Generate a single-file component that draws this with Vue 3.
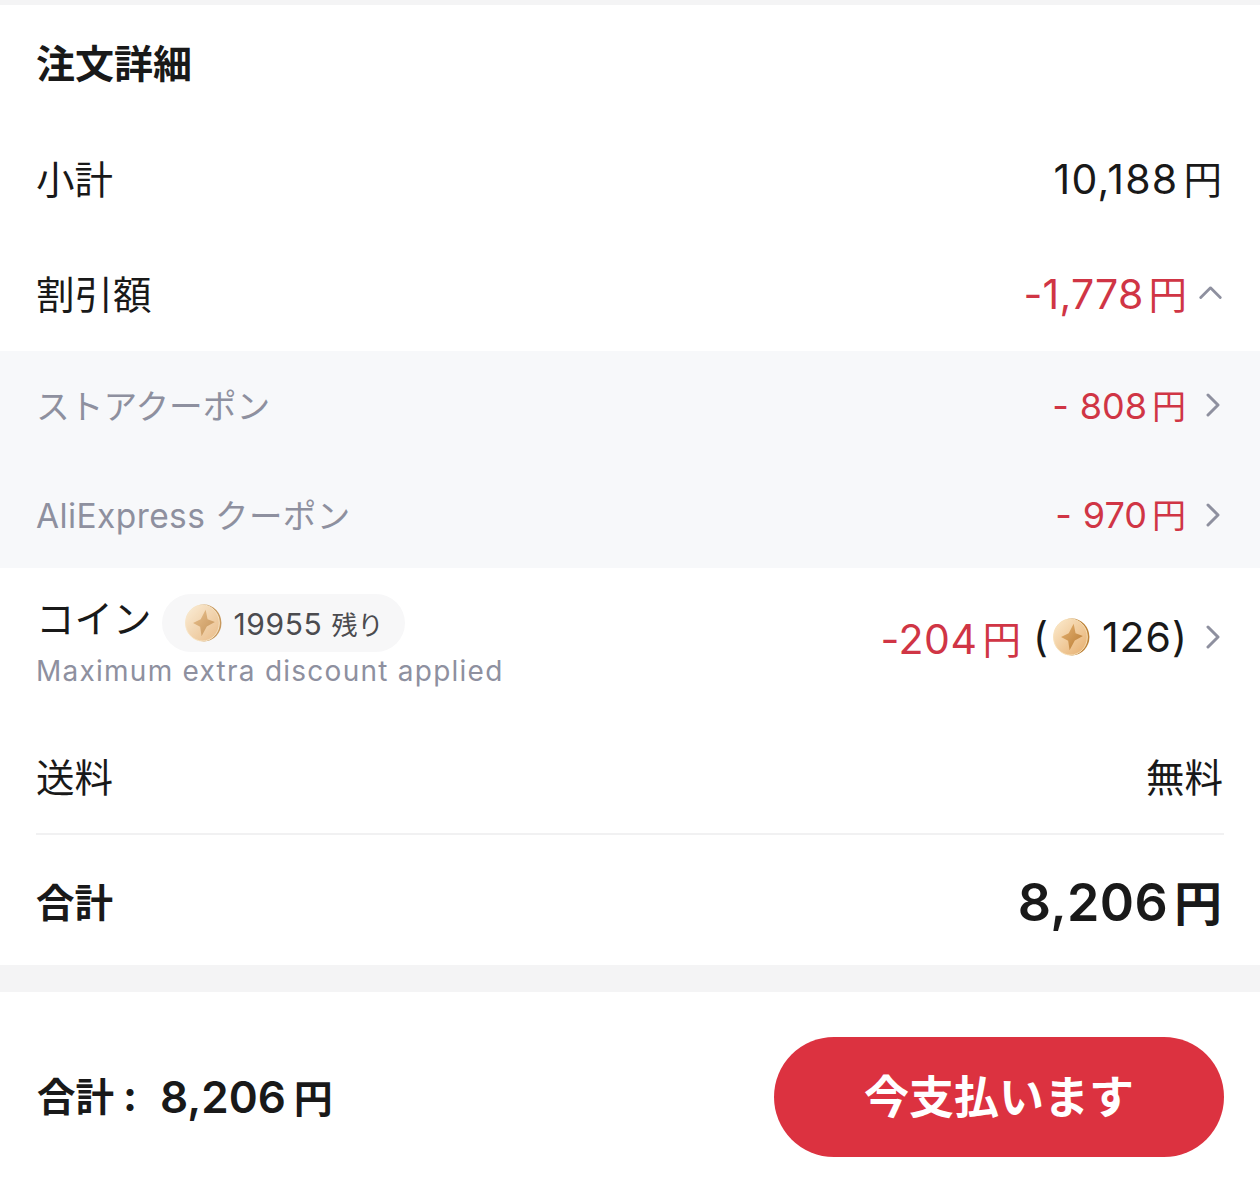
<template>
  <div class="page">
    <div class="strip top"></div>
    <section class="details">
      <h2 class="title">注文詳細</h2>
      <div class="row sub">
        <span>小計</span>
        <span class="num">10,188<i class="yen">円</i></span>
      </div>
      <div class="row disc">
        <span>割引額</span>
        <span class="val">
          <span class="num red">-1,778<i class="yen">円</i></span>
          <svg class="chev up" viewBox="0 0 24 14"><path d="M1.5 12.5 12 2l10.5 10.5" /></svg>
        </span>
      </div>
      <div class="band">
        <div v-for="c in coupons" :key="c.name" class="row coupon" :class="c.cls">
          <span class="cname">{{ c.name }}</span>
          <span class="val">
            <span class="num red"><span class="dash">-</span>{{ c.amount }}<i class="yen">円</i></span>
            <svg class="chev" viewBox="0 0 14 24"><path d="M2 2l10 10L2 22" /></svg>
          </span>
        </div>
      </div>
      <div class="row coin">
        <div class="coinleft">
          <div class="coinhead">
            <span class="coinlabel">コイン</span>
            <span class="pill">
              <svg class="coinicon pale" viewBox="0 0 40 40"><use href="#coin" /></svg>
              <span class="pilltext">19955<i class="left">残り</i></span>
            </span>
          </div>
          <div class="hint">Maximum extra discount applied</div>
        </div>
        <span class="val">
          <span class="num red">-204<i class="yen">円</i></span>
          <span class="num paren">(</span>
          <svg class="coinicon rich" viewBox="0 0 40 40">
            <defs>
              <linearGradient id="face" x1="0" y1="0" x2="1" y2="1">
                <stop offset="0" stop-color="#fcecd0" />
                <stop offset="1" stop-color="#e6ad6c" />
              </linearGradient>
              <linearGradient id="star" x1="0" y1="0" x2="1" y2="1">
                <stop offset="0" stop-color="#e6b474" />
                <stop offset="1" stop-color="#b87a32" />
              </linearGradient>
              <g id="coin">
                <ellipse cx="21" cy="20" rx="18.4" ry="19.4" fill="#bd8238" />
                <ellipse cx="19.4" cy="20" rx="17.8" ry="19" fill="url(#face)" stroke="#f8e2bc" stroke-width="1" />
                <path d="M22.8 6 24.8 16 32.5 19 24 23.6 18.5 34 17 24 9.5 20 17.6 16Z" fill="url(#star)" />
              </g>
            </defs>
            <use href="#coin" />
          </svg>
          <span class="num">126)</span>
          <svg class="chev" viewBox="0 0 14 24"><path d="M2 2l10 10L2 22" /></svg>
        </span>
      </div>
      <div class="row ship">
        <span>送料</span>
        <span class="free">無料</span>
      </div>
      <div class="row total">
        <span>合計</span>
        <span class="num big">8,206<i class="yen">円</i></span>
      </div>
    </section>
    <div class="strip mid"></div>
    <footer class="bar">
      <span class="sum"><span class="sumlabel">合計<span class="colon">:</span></span><span class="num">8,206<i class="yen">円</i></span></span>
      <button class="pay">今支払います</button>
    </footer>
  </div>
</template>

<script setup>
const coupons = [
  { name: 'ストアクーポン', amount: '808', cls: 'first' },
  { name: 'AliExpress クーポン', amount: '970', cls: 'second' }
]
</script>

<style>
html, body { background: #fff; }
</style>

<style scoped>
.page {
  width: 1260px;
  height: 1193px;
  background: #fff;
  color: #191919;
  font-family: Inter, "Noto Sans CJK JP", sans-serif;
  font-size: 38.5px;
  overflow: hidden;
}
.strip { background: #f4f4f5; }
.strip.top { height: 5px; }
.strip.mid { height: 27px; }
.details { height: 960px; }
.title {
  margin: 0;
  padding: 0 36px;
  height: 118px;
  line-height: 118px;
  font-size: 39px;
  font-weight: 700;
}
.row {
  display: flex;
  justify-content: space-between;
  align-items: center;
  padding: 0 36px;
}
.sub { height: 108px; }
.sub .num { letter-spacing: 1.3px; }
.disc { height: 120px; padding-top: 2px; box-sizing: border-box; }
.disc .num { letter-spacing: 0.2px; }
.val { display: flex; align-items: center; }
.num { font-size: 41px; letter-spacing: 1px; }
.yen { font-style: normal; font-size: 38.5px; letter-spacing: 0; margin-left: 5px; margin-right: 2px; }
.red { color: #d03545; }
.chev {
  fill: none;
  stroke: #8e909f;
  stroke-width: 3;
  stroke-linecap: round;
  stroke-linejoin: round;
  width: 14px;
  height: 24px;
  margin-left: 18px;
  margin-right: 4px;
}
.chev.up { width: 23px; height: 13px; margin-left: 10px; margin-right: 2px; }
.band { background: #f7f8fa; height: 217px; }
.coupon { height: 110px; box-sizing: border-box; }
.coupon.first { padding-bottom: 4px; }
.coupon.second { height: 107px; padding-bottom: 2px; }
.coupon .chev { margin-top: 2px; }
.cname { color: #8e909f; font-size: 33.7px; }
.second .cname { font-size: 33.5px; letter-spacing: 0.4px; }
.coupon .num { font-size: 36px; letter-spacing: 0; }
.coupon .yen { font-size: 34px; }
.dash { margin-right: 11px; }
.coin { height: 140px; align-items: flex-start; }
.coinleft { padding-top: 26px; }
.coinhead { display: flex; align-items: center; height: 58px; }
.coinlabel { margin-bottom: 14px; }
.pill {
  display: flex;
  align-items: center;
  height: 58px;
  margin-left: 10px;
  padding: 0 22px;
  border-radius: 29px;
  background: #f7f7f8;
}
.coinicon { width: 38px; height: 38px; display: block; }
.pale { opacity: 0.8; }
.pilltext { margin-left: 12px; font-size: 30px; color: #4b4b4f; letter-spacing: 0.6px; }
.left { font-style: normal; font-size: 26px; margin-left: 9px; letter-spacing: 0; }
.hint { margin-top: 2px; font-size: 28px; line-height: 34px; color: #8e909f; letter-spacing: 1.25px; }
.coin .val { margin-top: 41px; }
.coin .red { letter-spacing: 0.5px; }
.paren { margin-left: 10px; }
.rich { margin: 0 12px 0 3px; }
.ship { height: 127px; padding-top: 6px; box-sizing: border-box; position: relative; }
.ship::after {
  content: "";
  position: absolute;
  left: 36px;
  right: 36px;
  bottom: 0;
  height: 2px;
  background: #f1f1f2;
}
.free { margin-right: 1px; }
.total { height: 130px; font-weight: 700; }
.big { font-size: 52px; font-weight: 600; letter-spacing: 0.3px; }
.big .yen { font-size: 48px; margin-left: 6px; }
.bar {
  display: flex;
  justify-content: space-between;
  align-items: center;
  height: 211px;
  box-sizing: border-box;
  padding: 0 36px 2px 37px;
}
.sum { display: flex; align-items: center; font-weight: 700; margin-top: -2px; }
.sumlabel { width: 123px; margin-top: -3px; }
.colon { margin-left: 9px; font-size: 42px; }
.sum .num { font-size: 44px; font-weight: 600; letter-spacing: 0; }
.sum .yen { font-size: 39px; font-weight: 600; margin-left: 8px; }
.pay {
  width: 450px;
  height: 120px;
  border: 0;
  border-radius: 60px;
  background: #dc3240;
  color: #fff;
  font-family: inherit;
  font-size: 45px;
  font-weight: 600;
  padding: 0 0 4px;
}
</style>
